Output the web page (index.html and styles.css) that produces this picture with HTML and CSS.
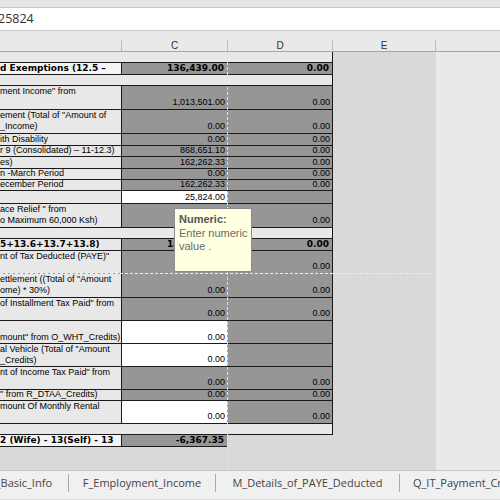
FILE: index.html
```html
<!DOCTYPE html>
<html>
<head>
<meta charset="utf-8">
<link rel="stylesheet" href="styles.css">
</head>
<body>
<div class="app">
  <div class="topstrip"></div>
  <div class="fbar"><span class="fval">25824</span></div>
  <div class="colhead">
    <div class="ch chb"></div>
    <div class="ch chc">C</div>
    <div class="ch chd">D</div>
    <div class="ch che">E</div>
  </div>
  <div class="main">
    <div class="sheet">
      <div class="row sp h10 nt"></div>
      <div class="row h12 bold">
        <div class="lab hl">d Exemptions (12.5 –</div>
        <div class="val">136,439.00</div>
        <div class="val dv">0.00</div>
      </div>
      <div class="row sp h11"></div>
      <div class="row h24 two">
        <div class="lab"><span>ment Income" from</span></div>
        <div class="val">1,013,501.00</div>
        <div class="val dv">0.00</div>
      </div>
      <div class="row h24 two">
        <div class="lab"><span>ement (Total of "Amount of</span><span>_Income)</span></div>
        <div class="val">0.00</div>
        <div class="val dv">0.00</div>
      </div>
      <div class="row h12">
        <div class="lab">ith Disability</div>
        <div class="val">0.00</div>
        <div class="val dv">0.00</div>
      </div>
      <div class="row h11">
        <div class="lab">r 9 (Consolidated) – 11-12.3)</div>
        <div class="val">868,651.10</div>
        <div class="val dv">0.00</div>
      </div>
      <div class="row h12">
        <div class="lab">es)</div>
        <div class="val">162,262.33</div>
        <div class="val dv">0.00</div>
      </div>
      <div class="row h11">
        <div class="lab">n -March Period</div>
        <div class="val">0.00</div>
        <div class="val dv">0.00</div>
      </div>
      <div class="row h11">
        <div class="lab">ecember Period</div>
        <div class="val">162,262.33</div>
        <div class="val dv">0.00</div>
      </div>
      <div class="row h13">
        <div class="lab"></div>
        <div class="val in">25,824.00</div>
        <div class="val dv"></div>
      </div>
      <div class="row h24 two">
        <div class="lab"><span>ace Relief " from</span><span>o Maximum 60,000 Ksh)</span></div>
        <div class="val"></div>
        <div class="val dv">0.00</div>
      </div>
      <div class="row sp h11"></div>
      <div class="row h12 bold">
        <div class="lab">5+13.6+13.7+13.8)</div>
        <div class="val">142,806.65</div>
        <div class="val dv">0.00</div>
      </div>
      <div class="row h23 two">
        <div class="lab"><span>nt of Tax Deducted (PAYE)"</span></div>
        <div class="val"></div>
        <div class="val dv">0.00</div>
      </div>
      <div class="row h24 two pb">
        <div class="lab"><span>ettlement ((Total of "Amount</span><span>ome) * 30%)</span></div>
        <div class="val">0.00</div>
        <div class="val dv">0.00</div>
      </div>
      <div class="row h23 two">
        <div class="lab"><span>of Installment Tax Paid" from</span></div>
        <div class="val">0.00</div>
        <div class="val dv">0.00</div>
      </div>
      <div class="row h23">
        <div class="lab">mount" from O_WHT_Credits)</div>
        <div class="val in">0.00</div>
        <div class="val dv"></div>
      </div>
      <div class="row h23 two">
        <div class="lab"><span>al Vehicle (Total of "Amount</span><span>_Credits)</span></div>
        <div class="val in">0.00</div>
        <div class="val dv"></div>
      </div>
      <div class="row h23 two">
        <div class="lab"><span>nt of Income Tax Paid" from</span></div>
        <div class="val">0.00</div>
        <div class="val dv">0.00</div>
      </div>
      <div class="row h11">
        <div class="lab">" from R_DTAA_Credits)</div>
        <div class="val">0.00</div>
        <div class="val dv">0.00</div>
      </div>
      <div class="row h23 two">
        <div class="lab"><span>mount Of Monthly Rental</span></div>
        <div class="val in">0.00</div>
        <div class="val dv">0.00</div>
      </div>
      <div class="row sp h12 bb"></div>
      <div class="row h12 bold last">
        <div class="lab hl">2 (Wife) - 13(Self) - 13</div>
        <div class="val">-6,367.35</div>
      </div>
    </div>
    <div class="outside"></div>
  </div>
  <div class="tabs">
    <div class="tab t1">_Basic_Info</div>
    <div class="sep"></div>
    <div class="tab t2">F_Employment_Income</div>
    <div class="sep"></div>
    <div class="tab t3">M_Details_of_PAYE_Deducted</div>
    <div class="sep"></div>
    <div class="tab t4">Q_IT_Payment_Credits</div>
  </div>
  <div class="vdash"></div>
  <div class="hdash"></div>
  <div class="tip"><b>Numeric:</b><br>Enter numeric<br>value .</div>
</div>
</body>
</html>
```

FILE: styles.css
```css
html, body {
  margin: 0;
  padding: 0;
}
body {
  width: 500px;
  height: 500px;
  overflow: hidden;
  background: #e9e9e9;
}
.app {
  position: relative;
  width: 500px;
  height: 500px;
  overflow: hidden;
  display: flex;
  flex-direction: column;
}
.topstrip {
  height: 7px;
  background: #e6e6e6;
}
.fbar {
  height: 24px;
  box-sizing: border-box;
  border-top: 1px solid #c8c8c8;
  border-bottom: 1px solid #c8c8c8;
  background: #ffffff;
  font: 12.5px/22px "Open Sans", sans-serif;
  color: #333333;
  white-space: nowrap;
  overflow: hidden;
}
.fval {
  margin-left: -2px;
}
.colhead {
  display: flex;
  height: 21px;
  box-sizing: border-box;
  padding-top: 9px;
  border-bottom: 1px solid #a6a6a6;
  background: #e9e9e9;
}
.ch {
  height: 11px;
  box-sizing: border-box;
  border-right: 1px solid #bdbdbd;
  text-align: center;
  font: 10px/11px "Liberation Sans", sans-serif;
  color: #333333;
}
.chb { width: 122px; }
.chc { width: 106px; }
.chd { width: 105px; }
.che { width: 103px; }
.main {
  display: flex;
  height: 418px;
}
.sheet {
  width: 436px;
  background: #d9d9d9;
}
.outside {
  flex: 1;
  background: #e9e9e9;
}
.row {
  display: grid;
  grid-template-columns: 122px 105px 106px;
  width: 333px;
  box-sizing: border-box;
  border-top: 1px solid #1a1a1a;
  font: 9px/11px "Liberation Sans", sans-serif;
  color: #000000;
}
.row.nt { border-top: none; }
.row.pb { border-top-color: #9a9a9a; }
.row.bb { border-bottom: 1px solid #1a1a1a; }
.h10 { height: 10px; }
.h11 { height: 11px; }
.h12 { height: 12px; }
.h13 { height: 13px; }
.h23 { height: 23px; }
.h24 { height: 24px; }
.sp {
  display: block;
  background: #e8e8e8;
  border-right: 1px solid #1a1a1a;
}
.lab, .val {
  box-sizing: border-box;
  overflow: hidden;
  white-space: nowrap;
  display: flex;
  flex-direction: column;
  justify-content: flex-end;
}
.lab {
  background: #e8e8e8;
  border-right: 1px solid #1a1a1a;
  align-items: flex-start;
}
.lab span {
  display: block;
}
.val {
  background: #969696;
  align-items: flex-end;
  padding-right: 2px;
}
.val.in { background: #ffffff; }
.dv { border-right: 1px solid #1a1a1a; }
.two .lab { justify-content: flex-start; }
.two .val { padding-bottom: 1px; }
.bold {
  font-family: "DejaVu Sans", sans-serif;
  font-weight: bold;
  font-size: 9px;
}
.bold .val { padding-right: 3px; }
.lab.hl { background: #f4f4f4; }
.last {
  width: 227px;
  grid-template-columns: 122px 105px;
  border-top: none;
  border-bottom: 1px solid #1a1a1a;
}
.tabs {
  display: flex;
  height: 30px;
  box-sizing: border-box;
  border-top: 1px solid #c6c6c6;
  border-bottom: 1px solid #dcdcdc;
  background: #f0f0f0;
  font: 11px/24px "Open Sans", sans-serif;
  color: #444444;
}
.tab {
  white-space: nowrap;
  overflow: hidden;
  height: 24px;
  box-sizing: border-box;
}
.t1 {
  width: 68px;
  display: flex;
  justify-content: flex-end;
  padding-right: 16px;
}
.t2 { width: 146px; text-align: center; }
.t3 { width: 183px; text-align: center; }
.t4 { flex: 1; padding-left: 13px; }
.sep {
  width: 1px;
  height: 18px;
  margin-top: 3px;
  background: #a8a8a8;
}
.vdash {
  position: absolute;
  left: 227px;
  top: 52px;
  width: 1px;
  height: 418px;
  background: repeating-linear-gradient(to bottom, #e2e2e2 0 3px, transparent 3px 5px);
}
.hdash {
  position: absolute;
  left: 0;
  top: 273px;
  width: 436px;
  height: 1px;
  background: repeating-linear-gradient(to right, #ececec 0 3px, transparent 3px 5px);
}
.tip {
  position: absolute;
  left: 174px;
  top: 208px;
  width: 78px;
  height: 64px;
  box-sizing: border-box;
  background: #ffffe1;
  border: 1px solid #8c8c8c;
  padding: 4px 4px 2px;
  font: 11px/13.5px "Liberation Sans", sans-serif;
  color: #6a6a6a;
  white-space: nowrap;
}
.tip b {
  color: #555555;
}
```
